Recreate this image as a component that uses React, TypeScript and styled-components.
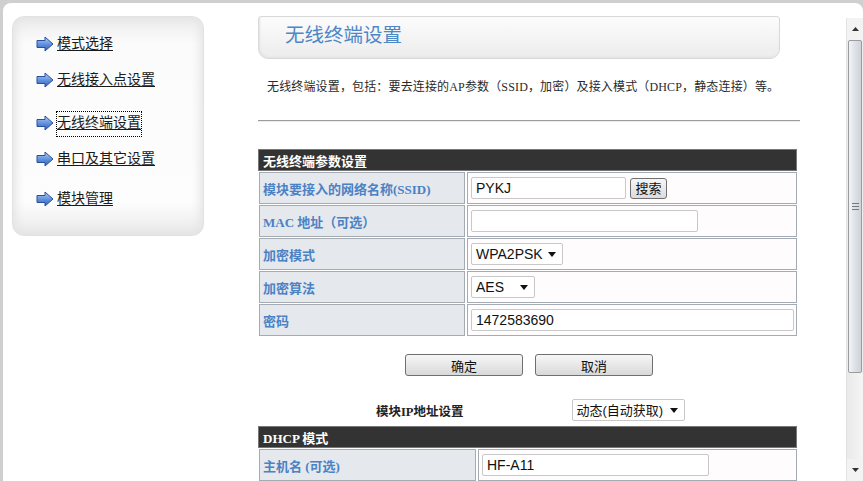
import React, { FC } from 'react';
import styled, { createGlobalStyle } from 'styled-components';

const GlobalStyle = createGlobalStyle`
  html, body {
    margin: 0;
    padding: 0;
    background: #cfcfcf;
    overflow: hidden;
  }
  * {
    box-sizing: border-box;
  }
`;

const SERIF = `"Liberation Serif", "Noto Sans CJK SC", serif`;
const SANS = `"Liberation Sans", "Noto Sans CJK SC", sans-serif`;
const CJK = `"Noto Sans CJK SC", sans-serif`;

interface NavItem {
  label: string;
  gap: number;
  focused?: boolean;
}

const NAV: NavItem[] = [
  { label: '模式选择', gap: 0 },
  { label: '无线接入点设置', gap: 18 },
  { label: '无线终端设置', gap: 25, focused: true },
  { label: '串口及其它设置', gap: 18 },
  { label: '模块管理', gap: 22 },
];

const NavArrow: FC = () => (
  <svg width="18" height="16" viewBox="0 0 18 16">
    <defs>
      <linearGradient id="arw" x1="0" y1="0" x2="0" y2="1">
        <stop offset="0" stopColor="#b4cef5" />
        <stop offset="0.5" stopColor="#6494de" />
        <stop offset="1" stopColor="#2f5fb8" />
      </linearGradient>
    </defs>
    <path
      d="M1 4.5 H9 V1 L17 8 L9 15 V11.5 H1 Z"
      fill="url(#arw)"
      stroke="#28509c"
      strokeWidth="1"
      strokeLinejoin="round"
    />
  </svg>
);

const Caret: FC = () => (
  <CaretSvg width="8" height="5" viewBox="0 0 8 5">
    <path d="M0 0 H8 L4 5 Z" fill="#111" />
  </CaretSvg>
);

interface SelectProps {
  width: number;
  value: string;
  options: string[];
  small?: boolean;
}

const FakeSelect: FC<SelectProps> = ({ width, value, options, small }) => (
  <SelectWrap $w={width}>
    <Select defaultValue={value} $small={small}>
      {options.map(o => (
        <option key={o}>{o}</option>
      ))}
    </Select>
    <Caret />
  </SelectWrap>
);

export default function App() {
  return (
    <>
      <GlobalStyle />
      <Frame>
        <Content>
          <Sidebar>
            {NAV.map(item => (
              <NavRow key={item.label} $gap={item.gap}>
                <NavArrow />
                <NavLink href="#" $focused={item.focused}>
                  {item.label}
                </NavLink>
              </NavRow>
            ))}
          </Sidebar>

          <Main>
            <TitleBox>
              <PageTitle>无线终端设置</PageTitle>
            </TitleBox>
            <Description>
              无线终端设置，包括：要去连接的AP参数（SSID，加密）及接入模式（DHCP，静态连接）等。
            </Description>
            <Rule />

            <Section $top={27}>
              <SectionHeader>无线终端参数设置</SectionHeader>
              <Row $label={206}>
                <LabelCell>模块要接入的网络名称(SSID)</LabelCell>
                <ValueCell>
                  <TextInput $w={155} defaultValue="PYKJ" />
                  <SmallButton>搜索</SmallButton>
                </ValueCell>
              </Row>
              <Row $label={206}>
                <LabelCell>MAC 地址（可选）</LabelCell>
                <ValueCell>
                  <TextInput $w={227} defaultValue="" />
                </ValueCell>
              </Row>
              <Row $label={206}>
                <LabelCell>加密模式</LabelCell>
                <ValueCell>
                  <FakeSelect
                    width={92}
                    value="WPA2PSK"
                    options={['OPEN', 'SHARED', 'WPAPSK', 'WPA2PSK']}
                  />
                </ValueCell>
              </Row>
              <Row $label={206}>
                <LabelCell>加密算法</LabelCell>
                <ValueCell>
                  <FakeSelect width={64} value="AES" options={['TKIP', 'AES']} />
                </ValueCell>
              </Row>
              <Row $label={206}>
                <LabelCell>密码</LabelCell>
                <ValueCell>
                  <TextInput $w={323} defaultValue="1472583690" />
                </ValueCell>
              </Row>
            </Section>

            <ButtonBar>
              <WideButton>确定</WideButton>
              <WideButton>取消</WideButton>
            </ButtonBar>

            <IpRow>
              <IpLabel>模块IP地址设置</IpLabel>
              <FakeSelect
                width={113}
                small
                value="动态(自动获取)"
                options={['动态(自动获取)', '静态(手动设置)']}
              />
            </IpRow>

            <Section $top={5}>
              <SectionHeader>DHCP 模式</SectionHeader>
              <Row $label={217}>
                <LabelCell>主机名 (可选)</LabelCell>
                <ValueCell>
                  <TextInput $w={227} defaultValue="HF-A11" />
                </ValueCell>
              </Row>
            </Section>
          </Main>
        </Content>

        <Scrollbar>
          <ScrollButton>
            <svg width="7" height="4" viewBox="0 0 7 4">
              <path d="M0 4 L3.5 0 L7 4 Z" fill="#333" />
            </svg>
          </ScrollButton>
          <Thumb>
            <Grip />
          </Thumb>
          <Track />
          <ScrollButton>
            <svg width="7" height="4" viewBox="0 0 7 4">
              <path d="M0 0 H7 L3.5 4 Z" fill="#333" />
            </svg>
          </ScrollButton>
        </Scrollbar>
      </Frame>
    </>
  );
}

const Frame = styled.div`
  margin: 3px 0 0 3px;
  height: 478px;
  display: flex;
  background: #fff;
  border-radius: 8px 8px 0 0;
  overflow: hidden;
`;

const Content = styled.div`
  flex: 1;
  display: flex;
  align-items: flex-start;
  padding: 13px 0 0 9px;
  overflow: hidden;
`;

const Sidebar = styled.nav`
  width: 192px;
  height: 220px;
  flex-shrink: 0;
  display: flex;
  flex-direction: column;
  padding: 16px 0 0 23px;
  border: 1px solid #e2e2e2;
  border-radius: 12px;
  background: linear-gradient(#ececec 0%, #fbfbfb 12%, #fdfdfd 85%, #e9e9e9 100%);
  box-shadow: inset 0 0 10px 3px #e4e4e4;
`;

const NavRow = styled.div<{ $gap: number }>`
  display: flex;
  align-items: center;
  gap: 3px;
  margin-top: ${({ $gap }) => $gap}px;
  height: 18px;
  & > svg {
    flex-shrink: 0;
    margin-top: 3px;
  }
`;

const NavLink = styled.a<{ $focused?: boolean }>`
  font-family: ${CJK};
  font-size: 14px;
  line-height: 18px;
  color: #1a1a1a;
  text-decoration: underline;
  text-underline-offset: 2px;
  white-space: nowrap;
  ${({ $focused }) =>
    $focused
      ? `
    outline: 1px dotted #000;
    outline-offset: 0;
    display: inline-block;
    align-self: flex-start;
    padding-bottom: 6px;
  `
      : ''}
`;

const Main = styled.main`
  width: 542px;
  margin-left: 54px;
  flex-shrink: 0;
  display: flex;
  flex-direction: column;
`;

const TitleBox = styled.div`
  width: 522px;
  height: 43px;
  display: flex;
  align-items: center;
  padding: 0 0 8px 26px;
  border: 1px solid #d9d9d9;
  border-radius: 3px 3px 10px 10px;
  background: linear-gradient(#fcfcfc, #ececec);
  box-shadow: inset 1px -1px 2px #e2e2e2;
`;

const PageTitle = styled.h1`
  margin: 0;
  font-family: ${CJK};
  font-weight: 400;
  font-size: 19.5px;
  color: #4d87c6;
`;

const Description = styled.p`
  margin: 20px 0 0 9px;
  font-family: ${SERIF};
  font-size: 12px;
  line-height: 16px;
  letter-spacing: 0.15px;
  color: #2a2a2a;
  white-space: nowrap;
`;

const Rule = styled.hr`
  width: 542px;
  margin: 25px 0 0;
  border: 0;
  border-top: 1px solid #9c9c9c;
  border-bottom: 1px solid #ececec;
`;

const Section = styled.section<{ $top: number }>`
  width: 539px;
  margin-top: ${({ $top }) => $top}px;
  display: flex;
  flex-direction: column;
  gap: 1px;
`;

const SectionHeader = styled.div`
  height: 22px;
  display: flex;
  align-items: center;
  padding-left: 4px;
  background: #333;
  border: 1px solid #777;
  font-family: ${SERIF};
  font-weight: 700;
  font-size: 13px;
  color: #fff;
`;

const Row = styled.div<{ $label: number }>`
  display: grid;
  grid-template-columns: ${({ $label }) => $label}px 1fr;
  gap: 2px;
  padding-left: 1px;
  height: 32px;
`;

const LabelCell = styled.div`
  display: flex;
  align-items: center;
  padding-left: 3px;
  background: #e5e8ed;
  border: 1px solid #a4abb3;
  font-family: ${SERIF};
  font-weight: 700;
  font-size: 13px;
  color: #4a82c4;
  white-space: nowrap;
`;

const ValueCell = styled.div`
  display: flex;
  align-items: center;
  gap: 4px;
  padding-left: 3px;
  background: #fefcfc;
  border: 1px solid #a4abb3;
`;

const TextInput = styled.input<{ $w: number }>`
  width: ${({ $w }) => $w}px;
  height: 22px;
  padding: 0 4px;
  border: 1px solid #c8c8c8;
  border-radius: 2px;
  background: #fff;
  font-family: ${SANS};
  font-size: 14px;
  color: #111;
  outline: none;
`;

const SmallButton = styled.button`
  width: 37px;
  height: 21px;
  padding: 0;
  border: 1px solid #6f6f6f;
  border-radius: 3px;
  background: linear-gradient(#f6f6f6, #dcdcdc);
  font-family: ${CJK};
  font-size: 13px;
  line-height: 18px;
  color: #111;
`;

const SelectWrap = styled.div<{ $w: number }>`
  position: relative;
  width: ${({ $w }) => $w}px;
  height: 22px;
`;

const Select = styled.select<{ $small?: boolean }>`
  appearance: none;
  width: 100%;
  height: 100%;
  padding: 0 16px 0 4px;
  border: 1px solid #c8c8c8;
  border-radius: 2px;
  background: #fff;
  font-family: ${SANS};
  font-size: ${({ $small }) => ($small ? 13 : 14)}px;
  color: #111;
  outline: none;
`;

const CaretSvg = styled.svg`
  position: absolute;
  right: 7px;
  top: 9px;
  pointer-events: none;
`;

const ButtonBar = styled.div`
  display: flex;
  justify-content: center;
  gap: 12px;
  margin-top: 18px;
`;

const WideButton = styled.button`
  width: 118px;
  height: 22px;
  padding: 0;
  border: 1px solid #6f6f6f;
  border-radius: 3px;
  background: linear-gradient(#f7f7f7, #d9d9d9);
  font-family: ${CJK};
  font-size: 13px;
  color: #111;
`;

const IpRow = styled.div`
  display: flex;
  align-items: center;
  margin-top: 23px;
  padding-left: 118px;
  gap: 108px;
`;

const IpLabel = styled.span`
  font-family: ${SERIF};
  font-weight: 700;
  font-size: 12.5px;
  color: #222;
  white-space: nowrap;
`;

const Scrollbar = styled.div`
  width: 17px;
  flex-shrink: 0;
  margin-top: 15px;
  display: flex;
  flex-direction: column;
  background: #ededed;
  border-left: 1px solid #e3e3e3;
`;

const ScrollButton = styled.div`
  height: 22px;
  display: flex;
  align-items: center;
  justify-content: center;
  background: #f3f3f3;
`;

const Thumb = styled.div`
  height: 333px;
  margin: 0 1px;
  display: flex;
  align-items: center;
  justify-content: center;
  border: 1px solid #9b9b9b;
  border-radius: 2px;
  background: linear-gradient(90deg, #f2f4f7, #d9dee5 60%, #cfd4db);
`;

const Grip = styled.div`
  width: 7px;
  height: 7px;
  border-top: 1px solid #777;
  border-bottom: 1px solid #777;
  background: linear-gradient(#fff0 40%, #777 40%, #777 60%, #fff0 60%);
`;

const Track = styled.div`
  flex: 1;
  background: linear-gradient(90deg, #e9e9e9, #f5f5f5);
`;
